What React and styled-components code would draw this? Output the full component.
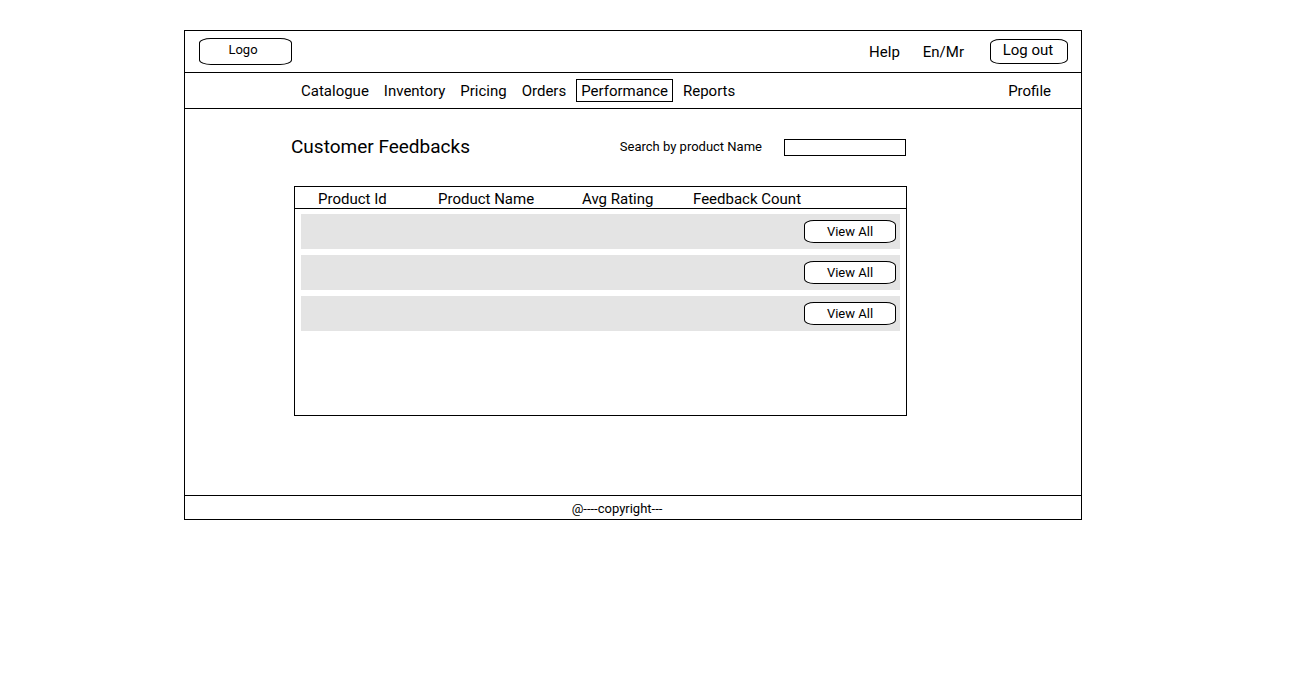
import React from "react";
import styled, { createGlobalStyle } from "styled-components";

const GlobalStyle = createGlobalStyle`
  *, *::before, *::after { box-sizing: border-box; }
  body {
    margin: 0;
    background: #fff;
    color: #000;
    font: 15px/20px Roboto, "Liberation Sans", sans-serif;
  }
`;

const Frame = styled.div`
  margin: 30px 226px 30px 184px;
  border: 1px solid #000;
`;

const Header = styled.header`
  display: flex;
  align-items: center;
  justify-content: space-between;
  min-height: 42px;
  padding: 0 13px 0 14px;
  border-bottom: 1px solid #000;
`;

const HeaderActions = styled.div`
  display: flex;
  align-items: center;
  gap: 23px;
`;

const TextLink = styled.a`
  color: inherit;
  text-decoration: none;
`;

const LogoLink = styled(TextLink)`
  display: flex;
  align-items: center;
  justify-content: center;
  width: 93px;
  height: 27px;
  padding: 0 5px 3px 0;
  border: 1px solid #000;
  border-radius: 12px / 5px;
  font-size: 13px;
`;

const PillButton = styled.button`
  display: flex;
  align-items: center;
  justify-content: center;
  width: ${(p) => (p.$compact ? "92px" : "78px")};
  height: ${(p) => (p.$compact ? "23px" : "25px")};
  padding: ${(p) => (p.$compact ? "0" : "0 2px 3px 0")};
  border: 1px solid #000;
  border-radius: 10px / 5px;
  background: #fff;
  color: inherit;
  font-family: inherit;
  font-size: ${(p) => (p.$compact ? "13px" : "15px")};
  line-height: 20px;
  cursor: pointer;
`;

const LogoutButton = styled(PillButton)`
  margin-left: 3px;
`;

const NavBar = styled.nav`
  display: flex;
  align-items: center;
  justify-content: space-between;
  min-height: 36px;
  padding: 0 25px 0 111px;
  border-bottom: 1px solid #000;
`;

const NavList = styled.div`
  display: flex;
  gap: 5px;
`;

const NavLink = styled(TextLink)`
  padding: 2px 4px 0;
  border: 1px solid ${(p) => (p.$active ? "#000" : "transparent")};
  line-height: 19px;
`;

const Main = styled.main`
  padding: 26px 174px 79px 106px;
`;

const TitleRow = styled.div`
  display: flex;
  align-items: center;
  justify-content: space-between;
  padding-right: 1px;
`;

const Title = styled.h1`
  margin: 0;
  font-size: 19px;
  font-weight: 400;
  line-height: 24px;
`;

const SearchField = styled.div`
  display: flex;
  align-items: center;
  gap: 22px;
  font-size: 13px;
`;

const SearchInput = styled.input`
  width: 122px;
  height: 17px;
  padding: 0 4px;
  border: 1px solid #000;
  border-radius: 0;
  background: #fff;
  font: inherit;
`;

const Panel = styled.section`
  min-height: 230px;
  margin: 27px 0 0 3px;
  border: 1px solid #000;
`;

const Table = styled.table`
  display: block;
`;

const TableHead = styled.thead`
  display: block;
  padding: 0 6px;
  border-bottom: 1px solid #000;
`;

const TableBody = styled.tbody`
  display: grid;
  gap: 6px;
  padding: 5px 6px;
`;

const Row = styled.tr`
  display: grid;
  grid-template-columns: 120px 144px 111px 111px 1fr;
  align-items: center;
  padding-left: 17px;
`;

const HeadRow = styled(Row)`
  min-height: 21px;
`;

const BodyRow = styled(Row)`
  min-height: 35px;
  background: #e4e4e4;
`;

const HeadCell = styled.th`
  padding: 3px 0 0;
  font-weight: 400;
  line-height: 18px;
  text-align: left;
  white-space: nowrap;
`;

const Cell = styled.td`
  padding: 0;
`;

const Footer = styled.footer`
  padding: 3px 32px 0 0;
  border-top: 1px solid #000;
  font-size: 13px;
  text-align: center;
`;

const NAV_ITEMS = ["Catalogue", "Inventory", "Pricing", "Orders", "Performance", "Reports"];
const COLUMNS = ["Product Id", "Product Name", "Avg Rating", "Feedback Count"];
const FEEDBACKS = [{ id: 1 }, { id: 2 }, { id: 3 }];

export default function App() {
  return (
    <>
      <GlobalStyle />
      <Frame>
        <Header>
          <LogoLink href="#home">Logo</LogoLink>
          <HeaderActions>
            <TextLink href="#help">Help</TextLink>
            <TextLink href="#language">En/Mr</TextLink>
            <LogoutButton type="button">Log out</LogoutButton>
          </HeaderActions>
        </Header>
        <NavBar>
          <NavList>
            {NAV_ITEMS.map((item) => (
              <NavLink
                key={item}
                href={`#${item.toLowerCase()}`}
                $active={item === "Performance"}
                aria-current={item === "Performance" ? "page" : undefined}
              >
                {item}
              </NavLink>
            ))}
          </NavList>
          <NavLink href="#profile">Profile</NavLink>
        </NavBar>
        <Main>
          <TitleRow>
            <Title>Customer Feedbacks</Title>
            <SearchField>
              <label htmlFor="product-search">Search by product Name</label>
              <SearchInput id="product-search" type="text" />
            </SearchField>
          </TitleRow>
          <Panel>
            <Table>
              <TableHead>
                <HeadRow>
                  {COLUMNS.map((column) => (
                    <HeadCell key={column} scope="col">{column}</HeadCell>
                  ))}
                </HeadRow>
              </TableHead>
              <TableBody>
                {FEEDBACKS.map((feedback) => (
                  <BodyRow key={feedback.id}>
                    {COLUMNS.map((column) => (
                      <Cell key={column} />
                    ))}
                    <Cell>
                      <PillButton type="button" $compact>View All</PillButton>
                    </Cell>
                  </BodyRow>
                ))}
              </TableBody>
            </Table>
          </Panel>
        </Main>
        <Footer>@----copyright---</Footer>
      </Frame>
    </>
  );
}
